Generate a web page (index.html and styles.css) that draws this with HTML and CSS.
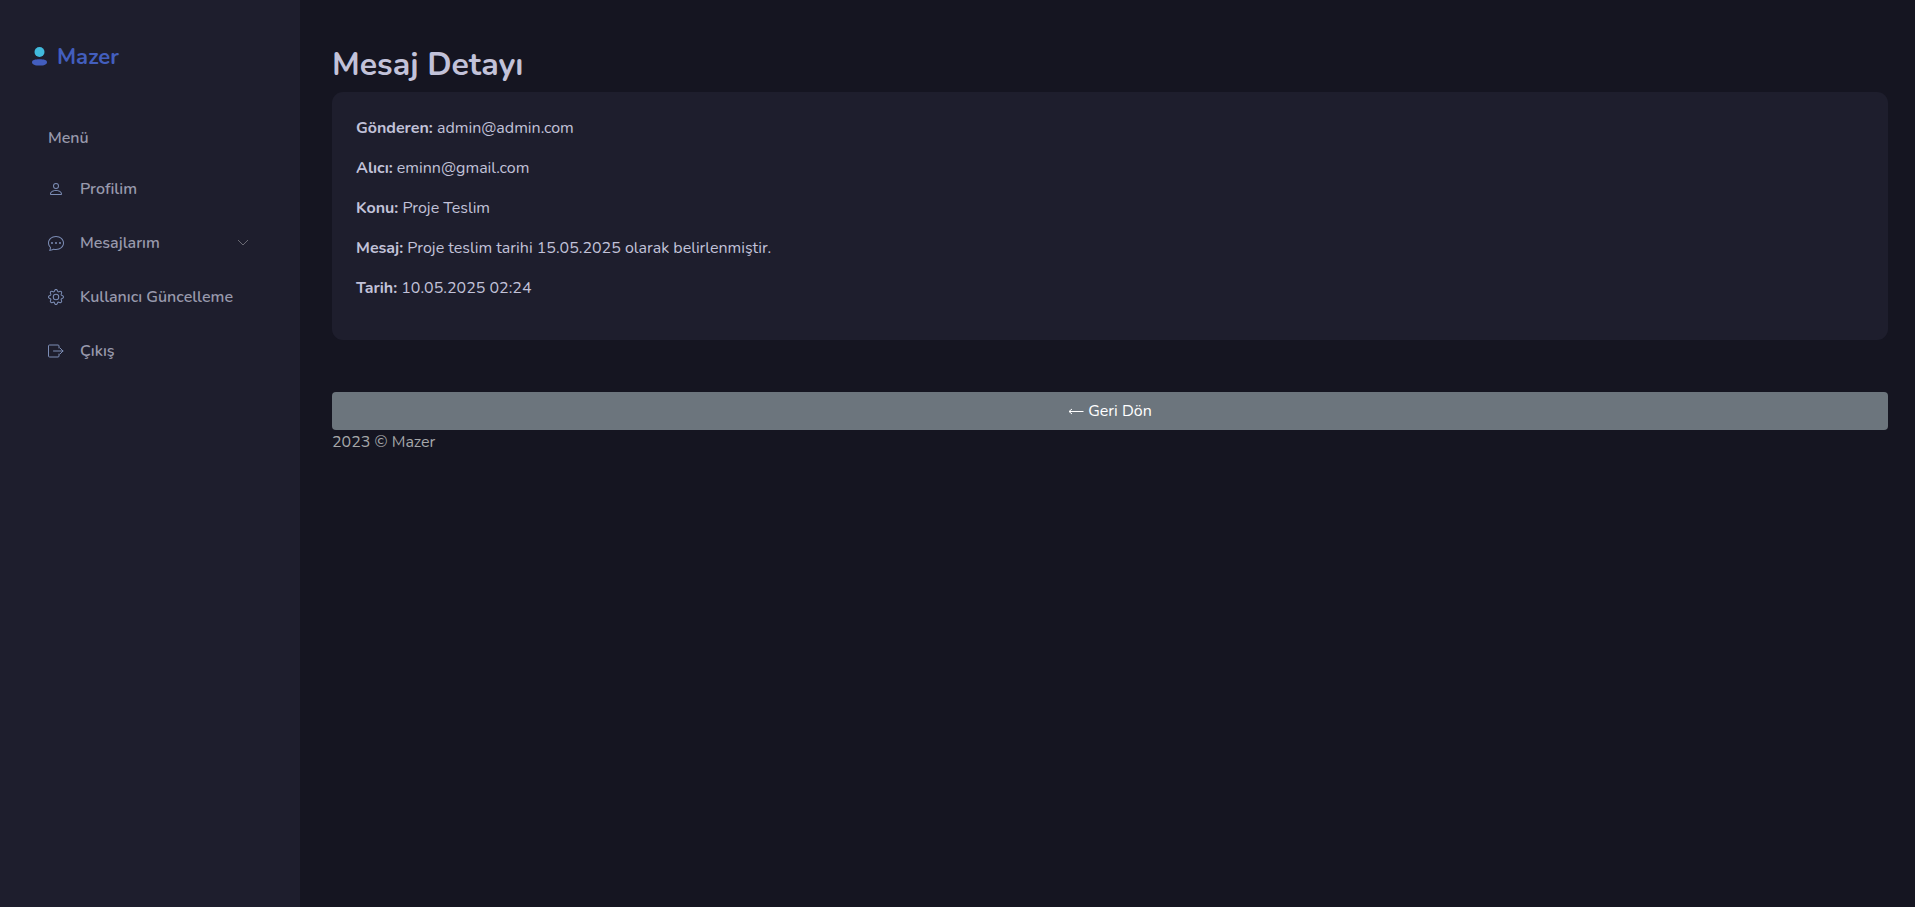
FILE: index.html
```
<!DOCTYPE html>
<html lang="tr">
<head>
  <meta charset="UTF-8">
  <meta name="viewport" content="width=device-width, initial-scale=1">
  <title>Mesaj Detayı</title>
  <link rel="stylesheet" href="styles.css">
</head>
<body>
  <aside class="sidebar">
    <a href="#" class="logo">
      <svg width="15" height="20" viewBox="0 0 15 20">
        <circle cx="7.5" cy="5" r="5" fill="#41bbdd"/>
        <path d="M0 15.2C0 13 3 12.2 7.5 12.2S15 13 15 15.2S12 18.6 7.5 18.6S0 17.4 0 15.2Z" fill="#435ebe"/>
      </svg>
      <span>Mazer</span>
    </a>

    <nav class="sidebar-menu">
      <h2 class="sidebar-title">Menü</h2>
      <ul class="menu">
        <li>
          <a href="#" class="sidebar-link">
            <svg class="icon" viewBox="0 0 16 16"><path d="M8 8a3 3 0 1 0 0-6 3 3 0 0 0 0 6zm2-3a2 2 0 1 1-4 0 2 2 0 0 1 4 0zm4 8c0 1-1 1-1 1H3s-1 0-1-1 1-4 6-4 6 3 6 4zm-1-.004c-.001-.246-.154-.986-.832-1.664C11.516 10.680 10.289 10 8 10c-2.290 0-3.516.680-4.168 1.332-.678.678-.830 1.418-.832 1.664h10z"/></svg>
            <span>Profilim</span>
          </a>
        </li>
        <li>
          <a href="#" class="sidebar-link">
            <svg class="icon" viewBox="0 0 16 16"><path d="M5 8a1 1 0 1 1-2 0 1 1 0 0 1 2 0zm4 0a1 1 0 1 1-2 0 1 1 0 0 1 2 0zm3 1a1 1 0 1 0 0-2 1 1 0 0 0 0 2z"/><path d="m2.165 15.803.020-.004c1.830-.363 2.948-.842 3.468-1.105A9.060 9.060 0 0 0 8 15c4.418 0 8-3.134 8-7s-3.582-7-8-7-8 3.134-8 7c0 1.760.743 3.370 1.970 4.600a10.437 10.437 0 0 1-.524 2.318l-.003.011a10.722 10.722 0 0 1-.244.637c-.079.186.074.394.273.362a21.673 21.673 0 0 0 .693-.125zm.800-3.108a1 1 0 0 0-.287-.801C1.618 10.830 1 9.468 1 8c0-3.192 3.004-6 7-6s7 2.808 7 6c0 3.193-3.004 6-7 6a8.060 8.060 0 0 1-2.088-.272 1 1 0 0 0-.711.074c-.387.196-1.240.570-2.634.893a10.970 10.970 0 0 0 .398-2z"/></svg>
            <span>Mesajlarım</span>
            <svg class="chevron" viewBox="0 0 18 18"><path d="M4 6l5 5 5-5"/></svg>
          </a>
        </li>
        <li>
          <a href="#" class="sidebar-link">
            <svg class="icon" viewBox="0 0 16 16"><path d="M8 4.754a3.246 3.246 0 1 0 0 6.492 3.246 3.246 0 0 0 0-6.492zM5.754 8a2.246 2.246 0 1 1 4.492 0 2.246 2.246 0 0 1-4.492 0z"/><path d="M9.796 1.343c-.527-1.790-3.065-1.790-3.592 0l-.094.319a.873.873 0 0 1-1.255.520l-.292-.160c-1.640-.892-3.433.902-2.540 2.541l.159.292a.873.873 0 0 1-.520 1.255l-.319.094c-1.790.527-1.790 3.065 0 3.592l.319.094a.873.873 0 0 1 .520 1.255l-.160.292c-.892 1.640.901 3.434 2.541 2.540l.292-.159a.873.873 0 0 1 1.255.520l.094.319c.527 1.790 3.065 1.790 3.592 0l.094-.319a.873.873 0 0 1 1.255-.520l.292.160c1.640.893 3.434-.902 2.540-2.541l-.159-.292a.873.873 0 0 1 .520-1.255l.319-.094c1.790-.527 1.790-3.065 0-3.592l-.319-.094a.873.873 0 0 1-.520-1.255l.160-.292c.893-1.640-.902-3.433-2.541-2.540l-.292.159a.873.873 0 0 1-1.255-.520l-.094-.319zm-2.633.283c.246-.835 1.428-.835 1.674 0l.094.319a1.873 1.873 0 0 0 2.693 1.115l.291-.160c.764-.415 1.600.420 1.184 1.185l-.159.292a1.873 1.873 0 0 0 1.116 2.692l.318.094c.835.246.835 1.428 0 1.674l-.319.094a1.873 1.873 0 0 0-1.115 2.693l.160.291c.415.764-.420 1.600-1.185 1.184l-.291-.159a1.873 1.873 0 0 0-2.693 1.116l-.094.318c-.246.835-1.428.835-1.674 0l-.094-.319a1.873 1.873 0 0 0-2.692-1.115l-.292.160c-.764.415-1.600-.420-1.184-1.185l.159-.291A1.873 1.873 0 0 0 1.945 8.930l-.319-.094c-.835-.246-.835-1.428 0-1.674l.319-.094A1.873 1.873 0 0 0 3.060 4.377l-.160-.292c-.415-.764.420-1.600 1.185-1.184l.292.159a1.873 1.873 0 0 0 2.692-1.115l.094-.319z"/></svg>
            <span>Kullanıcı Güncelleme</span>
          </a>
        </li>
        <li>
          <a href="#" class="sidebar-link">
            <svg class="icon" viewBox="0 0 16 16"><path d="M11 5V3a1 1 0 0 0-1-1H1.500a1 1 0 0 0-1 1v10a1 1 0 0 0 1 1H10a1 1 0 0 0 1-1v-2M5.500 8H15M12 5l3 3-3 3" fill="none" stroke="currentColor" stroke-linecap="round" stroke-linejoin="round"/></svg>
            <span>Çıkış</span>
          </a>
        </li>
      </ul>
    </nav>
  </aside>

  <div class="main">
    <main>
      <h1 class="page-title">Mesaj Detayı</h1>
      <div class="card">
        <p><strong>Gönderen:</strong> admin@admin.com</p>
        <p><strong>Alıcı:</strong> eminn@gmail.com</p>
        <p><strong>Konu:</strong> Proje Teslim</p>
        <p><strong>Mesaj:</strong> Proje teslim tarihi 15.05.2025 olarak belirlenmiştir.</p>
        <p><strong>Tarih:</strong> 10.05.2025 02:24</p>
      </div>
      <a href="#" class="btn">
        <svg width="16" height="8" viewBox="0 0 16 8"><path d="M15.500 4.500H1M4 2L1 4.500l3 2.500"/></svg>
        <span>Geri Dön</span>
      </a>
    </main>
    <footer class="footer">2023 © Mazer</footer>
  </div>
</body>
</html>
```
FILE: styles.css
```
* {
  box-sizing: border-box;
}
body {
  display: flex;
  min-height: 100vh;
  margin: 0;
  background: #151521;
  color: #c2c2d9;
  font-family: Nunito, Lato, "Noto Sans", sans-serif;
  font-size: 16px;
  line-height: 24px;
}
a {
  text-decoration: none;
}

/* sidebar */
.sidebar {
  flex: 0 0 300px;
  background: #1e1e2d;
}
.logo {
  display: flex;
  align-items: center;
  gap: 10px;
  padding: 41px 32px 31px;
  color: #435ebe;
  font-size: 22px;
  font-weight: 700;
  line-height: 32px;
}
.sidebar-menu {
  padding: 0 32px;
}
.sidebar-title {
  margin: 22px 0 16px;
  padding: 0 16px;
  color: #9899ac;
  font-size: 16px;
  font-weight: 600;
}
.menu {
  margin: 0;
  padding: 0;
  list-style: none;
}
.menu li {
  margin-bottom: 8px;
}
.sidebar-link {
  display: flex;
  align-items: center;
  gap: 16px;
  padding: 11px 16px;
  color: #9899ac;
  font-weight: 600;
}
.icon {
  width: 16px;
  height: 16px;
  fill: currentColor;
  color: #7c8db5;
}
.chevron {
  width: 18px;
  height: 18px;
  margin-left: auto;
  fill: none;
  stroke: #6a6a73;
}

/* content */
.main {
  flex: 1;
  padding: 46px 27px 32px 32px;
}
.page-title {
  margin: 0 0 8px;
  font-size: 32px;
  font-weight: 700;
  line-height: 38px;
}
.card {
  margin-bottom: 52px;
  padding: 24px;
  background: #1e1e2d;
  border-radius: 11px;
}
.card p {
  margin: 0 0 16px;
}
.btn {
  display: flex;
  align-items: center;
  justify-content: center;
  gap: 4px;
  padding: 7px 12px;
  background: #6c757d;
  border-radius: 4px;
  color: #fff;
}
.btn svg {
  fill: none;
  stroke: currentColor;
}
.footer {
  color: #a6a8aa;
}
```
